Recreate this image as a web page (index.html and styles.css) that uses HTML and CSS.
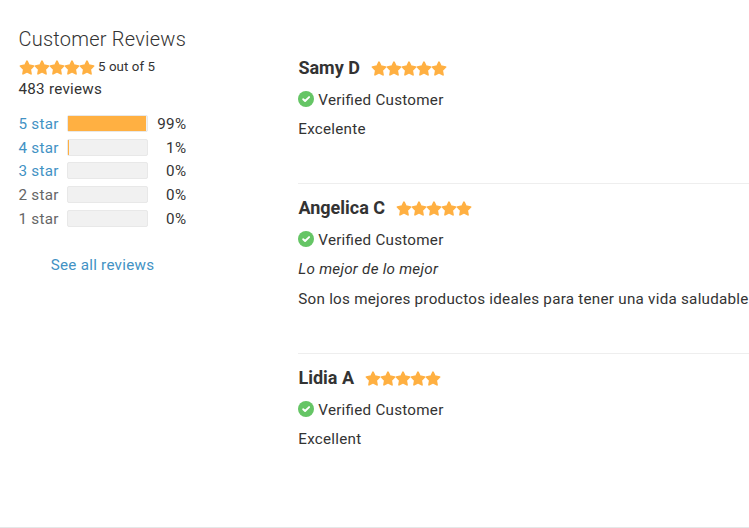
FILE: index.html
```
<!DOCTYPE html>
<html lang="es">
<head>
<meta charset="utf-8">
<title>Customer Reviews</title>
<link rel="stylesheet" href="styles.css">
</head>
<body>
<svg class="defs" width="0" height="0">
  <symbol id="star" viewBox="0 0 16 15"><path d="M8 1.200l1.900 4 4.700.8-3.400 3.300.8 4.500L8 11.700l-4 2.100.8-4.500L1.400 6l4.700-.8z" stroke="#ffb042" stroke-width="1.700" stroke-linejoin="round"/></symbol>
  <symbol id="stars" viewBox="0 0 76 15"><use href="#star" width="16" height="15"/><use href="#star" x="15" width="16" height="15"/><use href="#star" x="30" width="16" height="15"/><use href="#star" x="45" width="16" height="15"/><use href="#star" x="60" width="16" height="15"/></symbol>
  <symbol id="check" viewBox="0 0 16 16"><circle cx="8" cy="8" r="8" fill="#65c565"/><path d="M5.200 8.200l1.900 1.800 4-3.900" fill="none" stroke="#fff" stroke-width="1.900" stroke-linecap="round" stroke-linejoin="round"/></symbol>
</svg>
<main class="page">
  <aside class="summary">
    <h2 class="title">Customer Reviews</h2>
    <div class="score"><svg class="stars"><use href="#stars"/></svg><span>5 out of 5</span></div>
    <div class="count">483 reviews</div>
    <div class="histogram">
      <div class="row"><a class="link">5 star</a><div class="bar"><div class="fill" style="width:99%"></div></div><span class="pct">99%</span></div>
      <div class="row"><a class="link">4 star</a><div class="bar"><div class="fill" style="width:1%"></div></div><span class="pct">1%</span></div>
      <div class="row"><a class="link">3 star</a><div class="bar"></div><span class="pct">0%</span></div>
      <div class="row"><span class="muted">2 star</span><div class="bar"></div><span class="pct">0%</span></div>
      <div class="row"><span class="muted">1 star</span><div class="bar"></div><span class="pct">0%</span></div>
    </div>
    <a class="link all">See all reviews</a>
  </aside>
  <section class="reviews">
    <article class="review">
      <div class="head"><h3 class="name">Samy D</h3><svg class="stars"><use href="#stars"/></svg></div>
      <div class="verified"><svg class="check"><use href="#check"/></svg>Verified Customer</div>
      <p class="text">Excelente</p>
    </article>
    <article class="review long">
      <div class="head"><h3 class="name">Angelica C</h3><svg class="stars"><use href="#stars"/></svg></div>
      <div class="verified"><svg class="check"><use href="#check"/></svg>Verified Customer</div>
      <p class="text"><em>Lo mejor de lo mejor</em></p>
      <p class="text body">Son los mejores productos ideales para tener una vida saludable</p>
    </article>
    <article class="review last">
      <div class="head"><h3 class="name">Lidia A</h3><svg class="stars"><use href="#stars"/></svg></div>
      <div class="verified"><svg class="check"><use href="#check"/></svg>Verified Customer</div>
      <p class="text">Excellent</p>
    </article>
  </section>
</main>
</body>
</html>
```
FILE: styles.css
```
* { box-sizing: border-box; }
body { margin: 0; background: #fff; color: #333; font: 15.2px/22px Roboto, sans-serif; letter-spacing: .26px; font-feature-settings: "liga" 1; overflow: hidden; }
.defs { display: block; height: 0; }
.page { display: flex; height: 528px; border-bottom: 1px solid #e5e8e8; }
.summary { width: 298px; flex: none; padding: 27px 0 0 18.5px; }
.title { margin: 0; font-size: 20px; font-weight: 300; line-height: 24px; letter-spacing: .23px; }
.stars { display: block; width: 76px; height: 15px; fill: #ffb042; flex: none; }
.score { display: flex; align-items: center; gap: 3.5px; height: 32px; font-size: 13.3px; letter-spacing: .07px; }
.count { height: 22px; margin-top: -5px; }
.histogram { margin-top: 12px; width: 168px; }
.row { display: grid; grid-template-columns: 48.5px 81px 38.3px; align-items: center; height: 23.75px; white-space: nowrap; }
.link { color: #4292c4; }
.muted { color: #666; }
.bar { height: 17px; margin-top: -1px; background: #f1f1f1; border: 1px solid #e8e8e8; border-radius: 2px; }
.fill { height: 100%; min-width: 1px; background: #ffb042; }
.pct { text-align: right; }
.all { display: block; width: 168px; margin-top: 23px; text-align: center; }
.reviews { flex: 1; min-width: 0; padding-top: 44px; white-space: nowrap; }
.review { height: 140px; border-bottom: 1px solid #eee; }
.review.long { height: 170px; }
.review.last { border: 0; }
.head { display: flex; align-items: center; gap: 11.4px; height: 48px; }
.name { margin: 0; padding-left: .4px; font-size: 18px; font-weight: 700; letter-spacing: 0; }
.verified { display: flex; align-items: center; gap: 4.3px; height: 22px; margin-top: -3px; }
.check { width: 16px; height: 16px; margin-top: -2px; }
.text { margin: 0; padding: 7px 0 0 .3px; }
.body { padding-top: 8px; }
```
